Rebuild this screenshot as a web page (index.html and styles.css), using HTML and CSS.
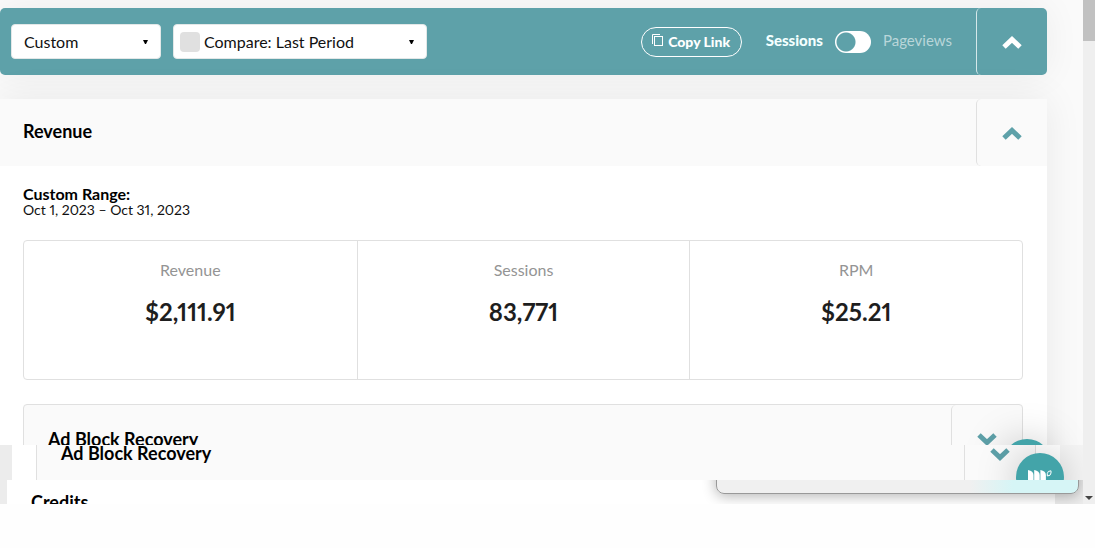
FILE: index.html
```
<!DOCTYPE html>
<html lang="en">
<head>
  <meta charset="UTF-8">
  <title>Revenue Dashboard</title>
  <link rel="stylesheet" href="styles.css">
</head>
<body>
  <div class="screen">
    <main class="content">

      <!-- DASHBOARD -->
      <div class="dashboard">
        <div class="toolbar">
          <div class="filters">
            <div class="select-box range-box">
              <select aria-label="Date range">
                <option>Custom</option>
              </select>
            </div>
            <div class="select-box compare-box">
              <input type="checkbox" class="compare-check" aria-label="Enable compare">
              <select aria-label="Compare period">
                <option>Compare: Last Period</option>
              </select>
            </div>
          </div>
          <button class="copy-link" type="button">
            <svg width="11" height="13" viewBox="0 0 11 13" fill="none" stroke="currentColor">
              <path d="M0.5 10V0.5H8"/>
              <rect x="2.5" y="2.5" width="8" height="9"/>
            </svg>
            Copy Link
          </button>
          <div class="metric-switch">
            <label class="metric active" for="metric">Sessions</label>
            <input type="checkbox" class="switch" id="metric">
            <label class="metric" for="metric">Pageviews</label>
          </div>
          <button class="collapse" type="button" aria-label="Collapse filters">
            <svg width="20" height="13" viewBox="0 0 20 13" fill="none" stroke="currentColor" stroke-width="5"><path d="M2 11L10 3.5L18 11"/></svg>
          </button>
        </div>

        <section class="card">
          <header class="card-header">
            <h2>Revenue</h2>
            <button class="collapse" type="button" aria-label="Collapse revenue">
              <svg width="20" height="13" viewBox="0 0 20 13" fill="none" stroke="currentColor" stroke-width="5"><path d="M2 11L10 3.5L18 11"/></svg>
            </button>
          </header>
          <div class="card-body">
            <h3>Custom Range:</h3>
            <p class="dates">Oct 1, 2023 – Oct 31, 2023</p>
            <div class="stats">
              <div class="stat">
                <span class="stat-label">Revenue</span>
                <strong class="stat-value">$2,111.91</strong>
              </div>
              <div class="stat">
                <span class="stat-label">Sessions</span>
                <strong class="stat-value">83,771</strong>
              </div>
              <div class="stat">
                <span class="stat-label">RPM</span>
                <strong class="stat-value">$25.21</strong>
              </div>
            </div>
            <div class="panel">
              <h2>Ad Block Recovery</h2>
              <button class="collapse" type="button" aria-label="Expand ad block recovery">
                <svg width="20" height="13" viewBox="0 0 20 13" fill="none" stroke="currentColor" stroke-width="5"><path d="M2 2L10 9.5L18 2"/></svg>
              </button>
            </div>
          </div>
        </section>
        <span class="badge"></span>
      </div>

      <!-- AD BLOCK RECOVERY -->
      <div class="strip recovery">
        <div class="recovery-card">
          <div class="recovery-panel">
            <h2>Ad Block Recovery</h2>
            <button class="collapse" type="button" aria-label="Expand recovery">
              <svg width="20" height="13" viewBox="0 0 20 13" fill="none" stroke="currentColor" stroke-width="5"><path d="M2 2L10 9.5L18 2"/></svg>
            </button>
          </div>
        </div>
        <button class="badge" type="button" aria-label="Help">
          <svg width="24" height="20" viewBox="0 0 24 20">
            <path fill="#fff" d="M0 0Q5.500 1 5.500 5V20H0ZM6.200 0Q11.700 1 11.700 5V20H6.200ZM12.400 0Q17.900 1 17.900 5V20H12.400Z"/>
            <path fill="none" stroke="#fff" d="M23 .8Q19.500 .8 19.300 3.500V6Q22.800 6 23 3Z"/>
          </svg>
        </button>
      </div>

      <!-- CREDITS -->
      <div class="strip credits">
        <div class="credits-card">
          <h2>Credits</h2>
        </div>
        <div class="drawer"></div>
      </div>
    </main>

    <div class="scrollbar">
      <div class="thumb"></div>
      <div class="arrow"></div>
    </div>
  </div>
</body>
</html>
```

FILE: styles.css
```
* {
  box-sizing: border-box;
}

body {
  margin: 0;
  background: #fefefe;
  color: #000;
  font-family: Lato, "Liberation Sans", sans-serif;
  font-variant-numeric: proportional-nums;
}

h2, h3, p {
  margin: 0;
}

h2 {
  font-size: 18px;
  line-height: 20px;
  font-weight: 700;
}

button, select {
  font-family: inherit;
}

.screen {
  display: flex;
}

.content {
  flex: 1;
  min-width: 0;
}

.dashboard {
  position: relative;
  height: 445px;
  padding: 8px 36px 0 0;
  background: #fafafa;
  overflow: hidden;
}

/* Toolbar */
.toolbar {
  display: flex;
  align-items: center;
  height: 67px;
  padding-left: 11px;
  border-radius: 5px;
  background: #5ea1a9;
  color: #fff;
  box-shadow: 0 0 36px rgba(0, 0, 0, 0.06);
}

.filters {
  display: flex;
  gap: 12px;
  margin-right: auto;
}

.select-box {
  display: flex;
  align-items: center;
  height: 35px;
  border: 1px solid #e3e8e8;
  border-radius: 4px;
  background: #fff;
}

.range-box {
  width: 150px;
  padding-left: 12px;
}

.compare-box {
  width: 254px;
  padding-left: 6px;
  gap: 4px;
}

.select-box select {
  flex: 1;
  height: 33px;
  padding: 0;
  border: 0;
  border-radius: 4px;
  appearance: none;
  background: url("data:image/svg+xml,%3Csvg xmlns='http://www.w3.org/2000/svg' width='5' height='4'%3E%3Cpath d='M0 0H5L3 4H2Z'/%3E%3C/svg%3E") no-repeat right 12px center;
  color: #111;
  font-size: 16px;
}

.compare-check {
  width: 20px;
  height: 20px;
  margin: 0;
  border-radius: 4px;
  appearance: none;
  background: #e0e0e0;
}

.copy-link {
  display: flex;
  align-items: center;
  justify-content: center;
  gap: 5px;
  width: 101px;
  height: 30px;
  padding: 0;
  border: 1px solid #fff;
  border-radius: 15px;
  background: none;
  color: #fff;
  font-size: 14px;
  font-weight: 900;
}

.copy-link svg {
  margin-bottom: 2px;
}

.metric-switch {
  display: flex;
  align-items: center;
  gap: 12px;
  margin: 0 24px;
}

.metric {
  padding-bottom: 3px;
  color: #b9d6d9;
  font-size: 15px;
  line-height: 20px;
}

.metric.active {
  color: #f3ffff;
  font-weight: 900;
}

.switch {
  width: 36px;
  height: 22px;
  margin: 0;
  border-radius: 11px;
  appearance: none;
  background: radial-gradient(circle at 11px 11px, #5ea1a9 9px, #fff 10px);
}

.collapse {
  display: flex;
  align-items: center;
  justify-content: center;
  flex: none;
  width: 71px;
  height: 67px;
  padding: 2px 0 0;
  border: 0;
  border-left: 1px solid #e0e0e0;
  border-radius: 5px;
  background: none;
  color: #5ea1a9;
}

.toolbar .collapse {
  border-color: #d5e8ea;
  color: #fff;
}

/* Revenue card */
.card {
  margin-top: 24px;
  background: #fff;
  box-shadow: 0 0 36px rgba(0, 0, 0, 0.07);
}

.card-header {
  display: flex;
  align-items: center;
  justify-content: space-between;
  padding-left: 23px;
  background: #fafafa;
}

.card-header h2 {
  padding-bottom: 3px;
}

.card-body {
  padding: 20px 24px 24px 23px;
}

.card-body h3 {
  font-size: 16px;
  line-height: 16px;
}

.dates {
  font-size: 14px;
  line-height: 16px;
  color: #111;
}

.stats {
  display: grid;
  grid-template-columns: repeat(3, 1fr);
  margin: 22px 0 24px;
  border: 1px solid #e0e0e0;
  border-radius: 4px;
}

.stat {
  display: flex;
  flex-direction: column;
  align-items: center;
  gap: 16px;
  height: 138px;
  padding-top: 19px;
}

.stat + .stat {
  border-left: 1px solid #e0e0e0;
}

.stat-label {
  color: #949494;
  font-size: 16px;
  line-height: 20px;
}

.stat-value {
  color: #1e1e1e;
  font-size: 24px;
  line-height: 32px;
}

.panel {
  display: flex;
  align-items: center;
  justify-content: space-between;
  padding-left: 24px;
  border: 1px solid #e0e0e0;
  border-radius: 4px;
  background: #fafafa;
}

/* Round help badge */
.badge {
  position: absolute;
  right: 32px;
  top: 439px;
  width: 48px;
  height: 48px;
  padding: 9px 0 0;
  border: 0;
  border-radius: 50%;
  background: #43a4a9;
  box-shadow: 0 2px 40px rgba(0, 0, 0, 0.25);
}

.strip {
  position: relative;
  overflow: hidden;
}

.recovery {
  height: 35px;
  padding: 0 23px 0 12px;
  background: linear-gradient(90deg, #ececec 12px, #f5f5f5 12px);
}

.recovery-card {
  height: 35px;
  padding: 0 24px;
  background: #fff;
}

.recovery-panel {
  display: flex;
  align-items: flex-start;
  justify-content: space-between;
  height: 35px;
  padding-left: 24px;
  border: solid #e0e0e0;
  border-width: 0 1px;
  background: #fafafa;
}

.recovery-panel h2 {
  line-height: 16px;
}

.recovery-panel .collapse {
  align-items: flex-start;
  height: 35px;
  padding-top: 3px;
  border-radius: 0;
}

.recovery .badge {
  right: 19px;
  top: 8px;
}

.credits {
  height: 24px;
  padding: 0 28px 0 7px;
  background: #ececec;
}

.credits-card {
  height: 24px;
  padding: 12px 24px 0;
  background: #fff;
}

.drawer {
  position: absolute;
  right: 4px;
  bottom: 10px;
  width: 363px;
  height: 40px;
  border: 1px solid #999;
  border-radius: 8px;
  background: linear-gradient(90deg, #f0f0f0 70%, #d6f5f6 82%);
  box-shadow: 0 2px 14px rgba(0, 0, 0, 0.3);
}

/* Scrollbar */
.scrollbar {
  display: flex;
  flex-direction: column;
  justify-content: space-between;
  align-items: center;
  width: 12px;
  padding-bottom: 4px;
  background: #efefef;
}

.thumb {
  width: 100%;
  height: 41px;
  background: #c1c1c1;
}

.arrow {
  border: 4px solid transparent;
  border-top-color: #444;
  border-bottom: 0;
}
```
